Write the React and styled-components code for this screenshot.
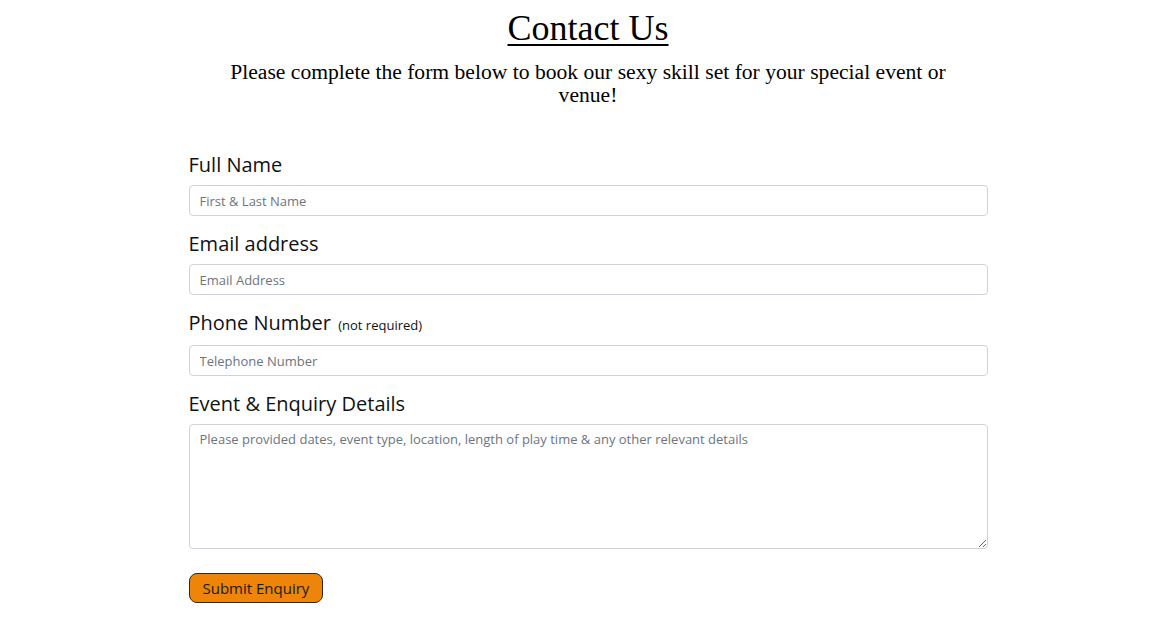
import React from 'react'
import styled, { createGlobalStyle } from 'styled-components'

const GlobalStyle = createGlobalStyle`
  body {
    margin: 0;
    background: #ffffff;
    color: #000000;
  }
  * {
    box-sizing: border-box;
  }
`

const Page = styled.section`
  display: flex;
  flex-direction: column;
  align-items: center;
  padding-top: 6px;
`

const Title = styled.h1`
  margin: 0;
  font-family: 'Liberation Serif', 'Times New Roman', serif;
  font-weight: 400;
  font-size: 36px;
  line-height: 44px;
  text-decoration: underline;
  text-decoration-thickness: 2px;
  text-underline-offset: 4px;
`

const Intro = styled.p`
  margin: 11px 0 0;
  max-width: 760px;
  text-align: center;
  font-family: 'Liberation Serif', 'Times New Roman', serif;
  font-size: 21.6px;
  line-height: 23px;
`

const Form = styled.form`
  width: 799px;
  margin-top: 46px;
  display: flex;
  flex-direction: column;
  font-family: 'Open Sans', 'Noto Sans', sans-serif;
`

const Group = styled.div`
  display: flex;
  flex-direction: column;
  margin-bottom: 16px;
`

const Label = styled.label`
  font-size: 20px;
  line-height: 24px;
  margin-bottom: 8px;
  color: #111;
`

const Note = styled.span`
  font-size: 13px;
  margin-left: 2px;
`

const fieldStyles = `
  width: 100%;
  border: 1px solid #ced4da;
  border-radius: 4px;
  padding: 0 10px;
  font-family: 'Open Sans', 'Noto Sans', sans-serif;
  font-size: 13px;
  color: #333;
  background: #fff;
  outline: none;
  &::placeholder {
    color: #6c757d;
  }
`

const Input = styled.input`
  ${fieldStyles}
  height: 31px;
`

const TextArea = styled.textarea`
  ${fieldStyles}
  height: 125px;
  padding-top: 5px;
  line-height: 18px;
  resize: vertical;
`

const Submit = styled.button`
  align-self: flex-start;
  margin-top: 8px;
  height: 30px;
  padding: 0 13px;
  background: #ee8508;
  border: 1px solid #2a2a2a;
  border-radius: 8px;
  font-family: 'Open Sans', 'Noto Sans', sans-serif;
  font-size: 15px;
  color: #1a1a1a;
  cursor: pointer;
`

const fields = [
  { id: 'name', label: 'Full Name', placeholder: 'First & Last Name', type: 'text' },
  { id: 'email', label: 'Email address', placeholder: 'Email Address', type: 'email' },
  { id: 'phone', label: 'Phone Number', note: '(not required)', placeholder: 'Telephone Number', type: 'tel' },
]

const App = () => (
  <>
    <GlobalStyle />
    <Page>
      <Title>Contact Us</Title>
      <Intro>
        Please complete the form below to book our sexy skill set for your special event or venue!
      </Intro>
      <Form onSubmit={e => e.preventDefault()}>
        {fields.map(field => (
          <Group key={field.id}>
            <Label htmlFor={field.id}>
              {field.label} {field.note && <Note>{field.note}</Note>}
            </Label>
            <Input id={field.id} type={field.type} placeholder={field.placeholder} />
          </Group>
        ))}
        <Group>
          <Label htmlFor="details">Event &amp; Enquiry Details</Label>
          <TextArea
            id="details"
            placeholder="Please provided dates, event type, location, length of play time & any other relevant details"
          />
        </Group>
        <Submit type="submit">Submit Enquiry</Submit>
      </Form>
    </Page>
  </>
)

export default App
